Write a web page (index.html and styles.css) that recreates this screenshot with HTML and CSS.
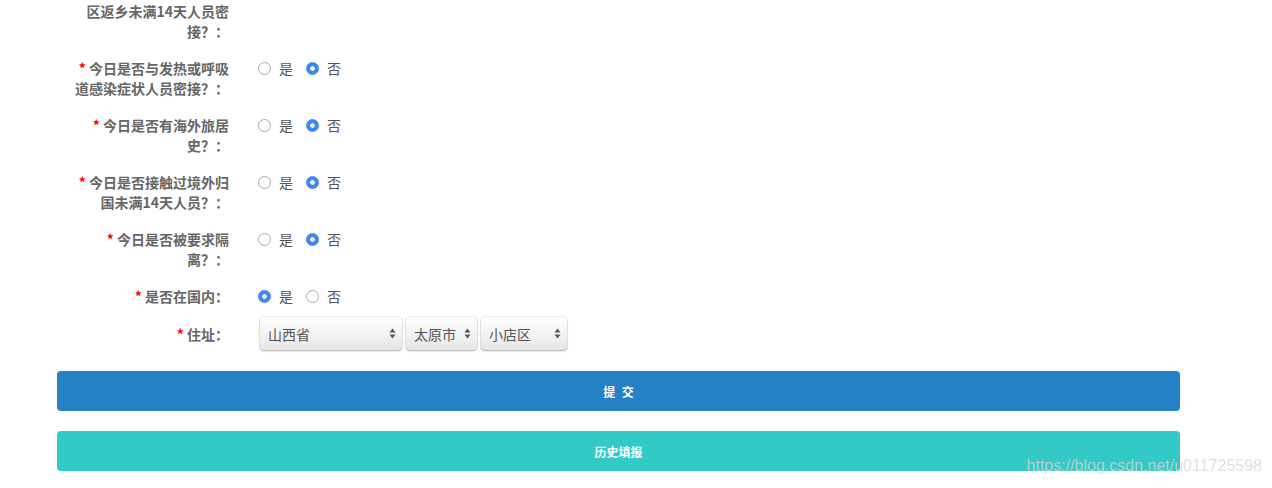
FILE: index.html
```html
<!DOCTYPE html>
<html lang="zh-CN">
<head>
    <meta charset="UTF-8">
    <meta name="viewport" content="width=device-width, initial-scale=1.0">
    <title>每日健康填报</title>
    <link rel="stylesheet" href="styles.css">
</head>
<body>
    <div class="page">
        <form class="report-form">
            <div class="form-row">
                <label class="row-label"><span class="req">*</span> 今日是否与中高风险地区返乡未满14天人员密接？：</label>
                <div class="row-control">
                    <label class="choice"><input type="radio" name="q1" value="1"> 是</label>
                    <label class="choice"><input type="radio" name="q1" value="0" checked> 否</label>
                </div>
            </div>

            <div class="form-row">
                <label class="row-label"><span class="req">*</span> 今日是否与发热或呼吸道感染症状人员密接？：</label>
                <div class="row-control">
                    <label class="choice"><input type="radio" name="q2" value="1"> 是</label>
                    <label class="choice"><input type="radio" name="q2" value="0" checked> 否</label>
                </div>
            </div>

            <div class="form-row">
                <label class="row-label"><span class="req">*</span> 今日是否有海外旅居史？：</label>
                <div class="row-control">
                    <label class="choice"><input type="radio" name="q3" value="1"> 是</label>
                    <label class="choice"><input type="radio" name="q3" value="0" checked> 否</label>
                </div>
            </div>

            <div class="form-row">
                <label class="row-label"><span class="req">*</span> 今日是否接触过境外归国未满14天人员？：</label>
                <div class="row-control">
                    <label class="choice"><input type="radio" name="q4" value="1"> 是</label>
                    <label class="choice"><input type="radio" name="q4" value="0" checked> 否</label>
                </div>
            </div>

            <div class="form-row">
                <label class="row-label"><span class="req">*</span> 今日是否被要求隔离？：</label>
                <div class="row-control">
                    <label class="choice"><input type="radio" name="q5" value="1"> 是</label>
                    <label class="choice"><input type="radio" name="q5" value="0" checked> 否</label>
                </div>
            </div>

            <div class="form-row form-row-tight">
                <label class="row-label"><span class="req">*</span> 是否在国内：</label>
                <div class="row-control">
                    <label class="choice"><input type="radio" name="q6" value="1" checked> 是</label>
                    <label class="choice"><input type="radio" name="q6" value="0"> 否</label>
                </div>
            </div>

            <div class="form-row form-row-select">
                <label class="row-label"><span class="req">*</span> 住址：</label>
                <div class="row-control">
                    <select class="select select-province"><option>山西省</option></select>
                    <select class="select select-city"><option>太原市</option></select>
                    <select class="select select-area"><option>小店区</option></select>
                </div>
            </div>
        </form>

        <button class="btn btn-submit" type="button">提 交</button>
        <button class="btn btn-history" type="button">历史填报</button>
    </div>

    <div class="watermark">https://blog.csdn.net/u011725598</div>
</body>
</html>
```

FILE: styles.css
```css
body {
    margin: 0;
    font-family: "Noto Sans CJK SC", "Noto Sans", sans-serif;
    background-color: #ffffff;
    color: #555;
    overflow: hidden;
}
.page {
    padding-left: 57px;
    width: 1123px;
}
.report-form {
    margin-top: -19px;
}
.form-row {
    display: flex;
    align-items: flex-start;
    margin-bottom: 17px;
}
.form-row-tight {
    margin-bottom: 11px;
}
.form-row-select {
    align-items: center;
    margin-bottom: 0;
}
.row-label {
    flex: 0 0 172px;
    box-sizing: border-box;
    padding-left: 12px;
    text-align: right;
    font-size: 14px;
    font-weight: bold;
    line-height: 20px;
    color: #666;
}
.req {
    color: #ff0000;
}
.row-control {
    display: flex;
    align-items: center;
    padding-left: 29px;
    min-height: 20px;
}
.choice {
    display: flex;
    align-items: center;
    font-size: 14px;
    line-height: 20px;
    color: #555;
    margin-right: 13px;
}
.choice input {
    appearance: none;
    -webkit-appearance: none;
    width: 13px;
    height: 13px;
    margin: 0 8px 0 0;
    border: 1px solid #a8a8a8;
    border-radius: 50%;
    background: #fff;
    box-sizing: border-box;
}
.choice input:checked {
    border-color: #3d86f4;
    background: radial-gradient(circle, #ffffff 0 2px, #3d86f4 2.5px);
}
.select {
    appearance: none;
    -webkit-appearance: none;
    height: 33px;
    margin-right: 4px;
    padding: 0 20px 0 8px;
    border: none;
    border-radius: 4px;
    font-family: inherit;
    font-size: 14px;
    color: #555;
    background-color: #f1f1f1;
    background-image: url("data:image/svg+xml,%3Csvg xmlns='http://www.w3.org/2000/svg' width='7' height='11'%3E%3Cpath d='M3.5 0.5 L6.5 4.5 H0.5 Z M3.5 10.5 L0.5 6.5 H6.5 Z' fill='%23555'/%3E%3C/svg%3E"), linear-gradient(#ffffff, #f4f4f4 45%, #e6e6e6);
    background-repeat: no-repeat;
    background-position: right 6px center, 0 0;
    box-shadow: 0 0 0 1px rgba(0, 0, 0, 0.06), 0 1px 2px rgba(0, 0, 0, 0.28);
}
.select-province {
    width: 142px;
    margin-left: 2px;
}
.select-city {
    width: 71px;
}
.select-area {
    width: 86px;
}
.btn {
    display: block;
    width: 100%;
    height: 40px;
    margin: 20px 0 0;
    border: none;
    border-radius: 4px;
    font-family: inherit;
    font-size: 12px;
    font-weight: bold;
    color: #ffffff;
    word-spacing: 4px;
    cursor: pointer;
}
.btn-submit {
    margin-top: 21px;
    background-color: #2481c5;
}
.btn-history {
    background-color: #32c9c6;
}
.watermark {
    position: absolute;
    right: 10px;
    top: 457px;
    font-family: "Liberation Sans", Arial, sans-serif;
    font-size: 16px;
    color: rgba(214, 214, 214, 0.78);
}
```
